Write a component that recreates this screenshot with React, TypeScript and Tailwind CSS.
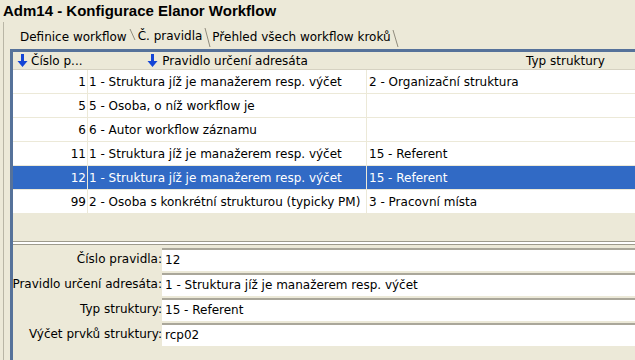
const FONT = "font-['DejaVu_Sans',Verdana,sans-serif]"

const ROWS = [
  { no: '1', rule: '1 - Struktura jíž je manažerem resp. výčet', typ: '2 - Organizační struktura' },
  { no: '5', rule: '5 - Osoba, o níž workflow je', typ: '' },
  { no: '6', rule: '6 - Autor workflow záznamu', typ: '' },
  { no: '11', rule: '1 - Struktura jíž je manažerem resp. výčet', typ: '15 - Referent' },
  { no: '12', rule: '1 - Struktura jíž je manažerem resp. výčet', typ: '15 - Referent', sel: true },
  { no: '99', rule: '2 - Osoba s konkrétní strukturou (typicky PM)', typ: '3 - Pracovní místa' },
]

const FIELDS = [
  { label: 'Číslo pravidla:', value: '12' },
  { label: 'Pravidlo určení adresáta:', value: '1 - Struktura jíž je manažerem resp. výčet' },
  { label: 'Typ struktury:', value: '15 - Referent' },
  { label: 'Výčet prvků struktury:', value: 'rcp02' },
]

function SortArrow() {
  return (
    <svg width="11" height="13" viewBox="0 0 11 13" className="shrink-0">
      <path d="M4 0h3v7h3.5L5.5 13 0.5 7H4z" fill="#1546d6" />
    </svg>
  )
}

function TabSlash({ h = 18 }: { h?: number }) {
  return (
    <svg width="7" height={h} viewBox={`0 0 7 ${h}`} className="shrink-0">
      <line x1="1" y1="1" x2="6" y2={h} stroke="#8f8b7c" strokeWidth="1" />
    </svg>
  )
}

export default function App() {
  return (
    <div className={`${FONT} flex h-[360px] w-[635px] flex-col overflow-hidden bg-[#ece9d8] text-[12px] text-black`}>
      <div className="h-[22px] pl-[3px] pt-[1px] font-['Liberation_Sans',Arial,sans-serif] text-[15px] font-bold leading-[20px]">
        Adm14 - Konfigurace Elanor Workflow
      </div>

      <div className="ml-[3px] flex flex-1 flex-col border-l border-[#b9b6a6]">
        <div className="flex h-[26px] items-end pl-[16px]">
          <div className="flex h-[22px] items-center pr-[2px]">Definice workflow</div>
          <div className="mb-[8px]"><TabSlash h={12} /></div>
          <div className="flex h-[24px] items-center px-[2px]">Č. pravidla</div>
          <div className="mb-[1px]"><TabSlash h={20} /></div>
          <div className="flex h-[22px] items-center px-[1px]">Přehled všech workflow kroků</div>
          <div className="mb-[1px]"><TabSlash h={18} /></div>
        </div>

        <div className="ml-[6px] mt-[1px] flex flex-1 flex-col border-l-[3px] border-t-[3px] border-[#56729a]">
          <div className="flex h-[18px] items-center border-b border-[#d6d2c2] bg-[#ece9d8] leading-[18px]">
            <div className="flex w-[75px] items-center gap-[3px] whitespace-nowrap pl-[4px]">
              <SortArrow />
              <span>Číslo p...</span>
            </div>
            <div className="flex w-[279px] items-center justify-center gap-[4px] whitespace-nowrap">
              <SortArrow />
              <span>Pravidlo určení adresáta</span>
            </div>
            <div className="flex-1 whitespace-nowrap pl-[159px]">Typ struktury</div>
          </div>

          {ROWS.map((r) => (
            <div
              key={r.no}
              className={`flex h-[24px] items-center whitespace-nowrap border-b border-[#ece9d8] ${r.sel ? 'bg-[#316ac5] text-white' : 'bg-white'}`}
            >
              <div className="h-full w-[75px] border-r border-[#ece9d8] pr-[1px] text-right leading-[24px]">{r.no}</div>
              <div className="h-full w-[279px] border-r border-[#ece9d8] pl-[1px] leading-[24px]">{r.rule}</div>
              <div className="h-full flex-1 pl-[2px] leading-[24px]">{r.typ}</div>
            </div>
          ))}

          <div className="h-[27px]" />
          <div className="h-[4px] border-y border-[#9d9a8c] bg-white" />

          <div className="flex flex-col gap-[1px] pt-[2px]">
            {FIELDS.map((f) => (
              <div key={f.label} className="flex h-[24px] items-center">
                <div className="flex w-[149px] shrink-0 justify-end whitespace-nowrap">{f.label}</div>
                <div className="h-[23px] flex-1 whitespace-nowrap border-t-2 border-[#aaa79a] bg-white pl-[3px] leading-[20px]">
                  {f.value}
                </div>
              </div>
            ))}
          </div>
        </div>
      </div>
    </div>
  )
}
